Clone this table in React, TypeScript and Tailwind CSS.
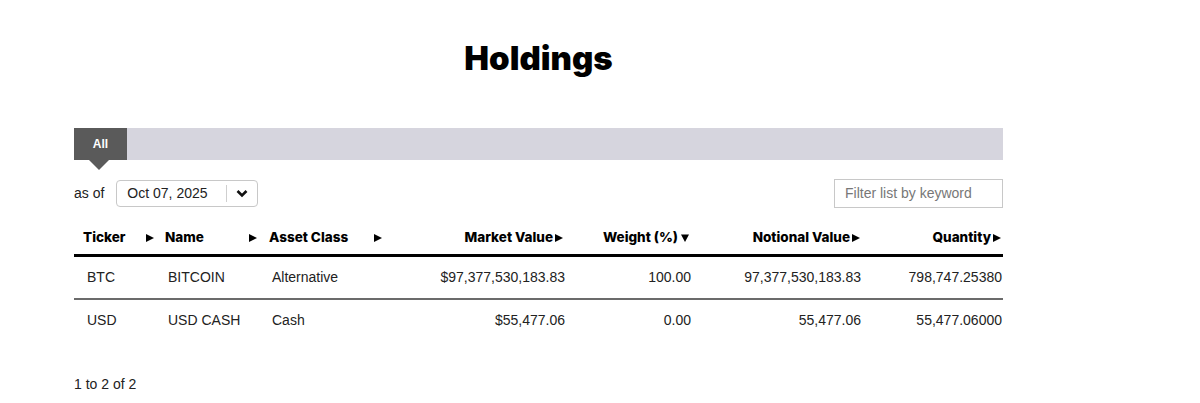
import React from "react";

const Right = () => (
  <svg width="10" height="10" viewBox="0 0 10 10" className="inline-block shrink-0">
    <polygon points="1,1 9,5 1,9" fill="#000" />
  </svg>
);
const Down = () => (
  <svg width="10" height="10" viewBox="0 0 10 10" className="inline-block shrink-0">
    <polygon points="1,1.5 9,1.5 5,9" fill="#000" />
  </svg>
);

const rows = [
  ["BTC", "BITCOIN", "Alternative", "$97,377,530,183.83", "100.00", "97,377,530,183.83", "798,747.25380"],
  ["USD", "USD CASH", "Cash", "$55,477.06", "0.00", "55,477.06", "55,477.06000"],
];

const grid = "grid grid-cols-[86px_102px_128px_179px_126px_170px_138px]";

export default function App() {
  return (
    <div className="min-h-[403px] bg-white text-black" style={{ fontFamily: '"Liberation Sans", Arial, sans-serif' }}>
      <div className="ml-[74px] w-[929px] pt-[36px]">
        <h1 className="text-center text-[33px] leading-[44px] font-black tracking-[0px]" style={{ fontFamily: "Inter, sans-serif" }}>
          Holdings
        </h1>
        <div className="mt-[48px] h-[32px] bg-[#d6d5de] flex">
          <div className="relative w-[53px] h-[32px] bg-[#5a5a5a] flex items-center justify-center text-white text-[12px] font-bold">
            All
            <div className="absolute left-[15px] top-[32px] w-0 h-0 border-l-[10px] border-r-[10px] border-t-[10px] border-l-transparent border-r-transparent border-t-[#5a5a5a]" />
          </div>
        </div>
        <div className="mt-[19px] flex items-center justify-between h-[29px]">
          <div className="flex items-center">
            <span className="text-[14px] text-[#222]">as of</span>
            <div className="ml-[12px] w-[142px] h-[27px] border border-[#c8c8c8] rounded-[4px] flex items-center">
              <span className="pl-[10px] text-[14px] text-[#222] w-[109px]">Oct 07, 2025</span>
              <div className="w-px h-[17px] bg-[#cfcfcf]" />
              <div className="flex-1 flex items-center justify-center">
                <svg width="12" height="9" viewBox="0 0 12 9">
                  <polyline points="1.5,2 6,6.5 10.5,2" fill="none" stroke="#111" strokeWidth="2.6" strokeLinejoin="miter" />
                </svg>
              </div>
            </div>
          </div>
          <div className="w-[169px] h-[29px] border border-[#c8c8c8] flex items-center pl-[10px] text-[14px] text-[#777]">
            Filter list by keyword
          </div>
        </div>
        <div className={`${grid} mt-[13px] h-[33px] items-center text-[13.5px] font-extrabold`} style={{ fontFamily: "Inter, sans-serif" }}>
          <div className="flex items-center justify-between pl-[9px] pr-[5px]"><span>Ticker</span><Right /></div>
          <div className="flex items-center justify-between pl-[5px] pr-[4px]"><span>Name</span><Right /></div>
          <div className="flex items-center justify-between pl-[7px] pr-[7px]"><span>Asset Class</span><Right /></div>
          <div className="flex items-center justify-end gap-[1px] pr-[5px]"><span>Market Value</span><Right /></div>
          <div className="flex items-center justify-end gap-[2px] pr-[5px]"><span>Weight (%)</span><Down /></div>
          <div className="flex items-center justify-end gap-[1px] pr-[4px]"><span>Notional Value</span><Right /></div>
          <div className="flex items-center justify-end gap-[1px] pr-[1px]"><span>Quantity</span><Right /></div>
        </div>
        <div className="h-[3px] bg-black" />
        {rows.map((r, i) => (
          <div key={i}>
            <div className={`${grid} h-[41px] items-center text-[14px] text-[#222]`}>
              <div className="pl-[13px]">{r[0]}</div>
              <div className="pl-[8px]">{r[1]}</div>
              <div className="pl-[10px]">{r[2]}</div>
              <div className="text-right pr-[4px]">{r[3]}</div>
              <div className="text-right pr-[4px]">{r[4]}</div>
              <div className="text-right pr-[4px]">{r[5]}</div>
              <div className="text-right pr-[1px]">{r[6]}</div>
            </div>
            {i === 0 && <div className="h-[2px] bg-[#6b6b6b]" />}
          </div>
        ))}
        <div className="mt-[33px] text-[14px] text-[#222]">1 to 2 of 2</div>
      </div>
    </div>
  );
}
